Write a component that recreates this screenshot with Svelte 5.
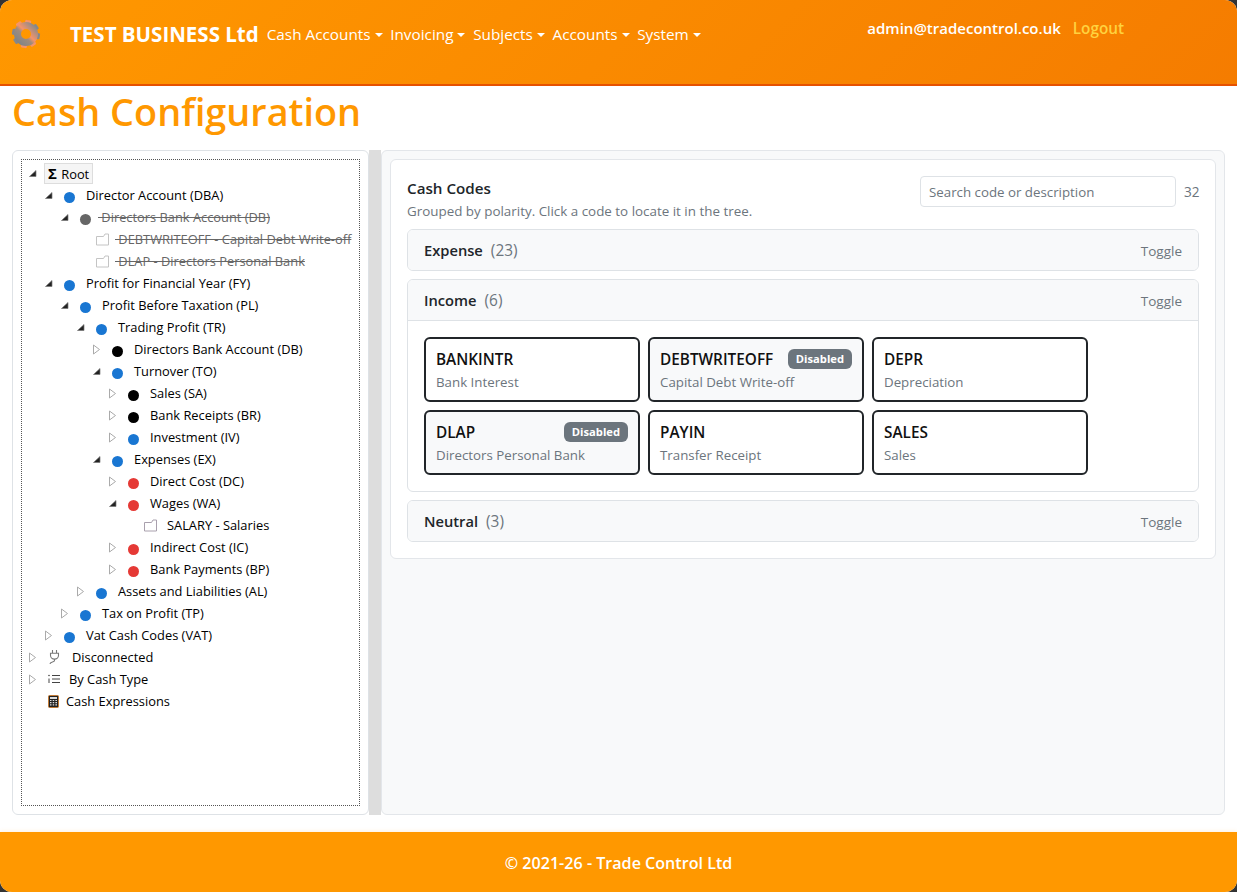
<script>
  const nav = ['Cash Accounts', 'Invoicing', 'Subjects', 'Accounts', 'System'];
  const tree = [
    { d: 1, t: 'open', k: 'dot', c: '#1976d2', label: 'Director Account (DBA)' },
    { d: 2, t: 'open', k: 'dot', c: '#666', label: 'Directors Bank Account (DB)', off: true },
    { d: 3, k: 'file', label: 'DEBTWRITEOFF - Capital Debt Write-off', off: true },
    { d: 3, k: 'file', label: 'DLAP - Directors Personal Bank', off: true },
    { d: 1, t: 'open', k: 'dot', c: '#1976d2', label: 'Profit for Financial Year (FY)' },
    { d: 2, t: 'open', k: 'dot', c: '#1976d2', label: 'Profit Before Taxation (PL)' },
    { d: 3, t: 'open', k: 'dot', c: '#1976d2', label: 'Trading Profit (TR)' },
    { d: 4, t: 'shut', k: 'dot', c: '#000', label: 'Directors Bank Account (DB)' },
    { d: 4, t: 'open', k: 'dot', c: '#1976d2', label: 'Turnover (TO)' },
    { d: 5, t: 'shut', k: 'dot', c: '#000', label: 'Sales (SA)' },
    { d: 5, t: 'shut', k: 'dot', c: '#000', label: 'Bank Receipts (BR)' },
    { d: 5, t: 'shut', k: 'dot', c: '#1976d2', label: 'Investment (IV)' },
    { d: 4, t: 'open', k: 'dot', c: '#1976d2', label: 'Expenses (EX)' },
    { d: 5, t: 'shut', k: 'dot', c: '#e53935', label: 'Direct Cost (DC)' },
    { d: 5, t: 'open', k: 'dot', c: '#e53935', label: 'Wages (WA)' },
    { d: 6, k: 'file', label: 'SALARY - Salaries' },
    { d: 5, t: 'shut', k: 'dot', c: '#e53935', label: 'Indirect Cost (IC)' },
    { d: 5, t: 'shut', k: 'dot', c: '#e53935', label: 'Bank Payments (BP)' },
    { d: 3, t: 'shut', k: 'dot', c: '#1976d2', label: 'Assets and Liabilities (AL)' },
    { d: 2, t: 'shut', k: 'dot', c: '#1976d2', label: 'Tax on Profit (TP)' },
    { d: 1, t: 'shut', k: 'dot', c: '#1976d2', label: 'Vat Cash Codes (VAT)' }
  ];
  const codes = [
    { code: 'BANKINTR', desc: 'Bank Interest' },
    { code: 'DEBTWRITEOFF', desc: 'Capital Debt Write-off', off: true },
    { code: 'DEPR', desc: 'Depreciation' },
    { code: 'DLAP', desc: 'Directors Personal Bank', off: true },
    { code: 'PAYIN', desc: 'Transfer Receipt' },
    { code: 'SALES', desc: 'Sales' }
  ];
  const gearTeeth = [
    { a: 0, c: '#f5946a' }, { a: 45, c: '#85888b' }, { a: 90, c: '#85888b' }, { a: 135, c: '#f5946a' },
    { a: 180, c: '#f5946a' }, { a: 225, c: '#85888b' }, { a: 270, c: '#85888b' }, { a: 315, c: '#f5946a' }
  ];
</script>

{#snippet toggle(kind)}
  <span class="tog">
    {#if kind === 'open'}
      <svg width="9" height="9" viewBox="0 0 9 9"><path d="M8 1.5V7.5H1.5Z" fill="#222" stroke="#777" stroke-width=".7"/></svg>
    {:else if kind === 'shut'}
      <svg width="9" height="11" viewBox="0 0 9 11"><path d="M1.5 1V10L7.5 5.5Z" fill="#fff" stroke="#aaa" stroke-width="1"/></svg>
    {/if}
  </span>
{/snippet}

<div class="page">
  <header class="top">
    <svg class="logo" width="30" height="30" viewBox="0 0 30 30">
      <defs>
        <linearGradient id="lg" x1="0" y1="1" x2="1" y2="0">
          <stop offset="0" stop-color="#7f8487"/>
          <stop offset=".4" stop-color="#a08c7c"/>
          <stop offset=".55" stop-color="#f5946a"/>
          <stop offset="1" stop-color="#8a8a8a"/>
        </linearGradient>
      </defs>
      {#each gearTeeth as g}
        <rect x="12" y="1" width="6" height="6" rx="1.2" fill={g.c} transform="rotate({g.a + 10} 15 15)"/>
      {/each}
      <circle cx="15" cy="15" r="8.5" fill="none" stroke="url(#lg)" stroke-width="7"/>
    </svg>
    <span class="brand">TEST BUSINESS Ltd</span>
    <nav class="menu">
      {#each nav as item}
        <span class="item">{item}<i class="caret"></i></span>
      {/each}
    </nav>
    <div class="user">
      <span class="mail">admin@tradecontrol.co.uk</span>
      <span class="out">Logout</span>
    </div>
  </header>

  <h1>Cash Configuration</h1>

  <main class="split">
    <section class="left">
      <div class="tree">
        <div class="row first">
          {@render toggle('open')}
          <span class="root"><b>Σ</b> Root</span>
        </div>
        {#each tree as n}
          <div class="row" class:off={n.off} style="padding-left:{n.d * 16}px">
            {@render toggle(n.t)}
            {#if n.k === 'dot'}
              <span class="dot" style="background:{n.c}"></span>
            {:else}
              <svg class="file" width="14" height="14" viewBox="0 0 14 14"><path d="M.5 4.5H7.5L9 2H12.5V13H.5Z" fill="#fff" stroke={n.off ? '#c4c4c4' : '#a9a0ad'}/></svg>
            {/if}
            <span class="text">{n.off ? '\u00a0' : ''}{n.label}</span>
          </div>
        {/each}
        <div class="row">
          {@render toggle('shut')}
          <svg class="ico plug" width="12" height="16" viewBox="0 0 12 16" fill="none" stroke="#777" stroke-width="1.1"><path d="M4.5 1V4M8.5 1V4M2.5 4.2H10.5V6.5A4 3.6 0 0 1 2.5 6.5ZM6.5 10V11.5C6.5 13.5 2 12.5 2 15"/></svg>
          <span class="text t-dis">Disconnected</span>
        </div>
        <div class="row">
          {@render toggle('shut')}
          <svg class="ico" width="12" height="12" viewBox="0 0 12 12" fill="none" stroke="#444" stroke-width="1"><path d="M4 2.5H12M4 6H12M4 9.5H12M1 5.5V10"/><circle cx="1" cy="2.5" r=".8" fill="#444" stroke="none"/></svg>
          <span class="text t-type">By Cash Type</span>
        </div>
        <div class="row">
          {@render toggle()}
          <svg class="ico" width="11" height="13" viewBox="0 0 11 13"><rect x=".5" y=".5" width="10" height="12" rx="1" fill="#222" stroke="#c27a35"/><rect x="2" y="2" width="7" height="2" fill="#ddd"/><path d="M2 5.5H3.5M4.7 5.5H6.2M7.4 5.5H9M2 7.7H3.5M4.7 7.7H6.2M7.4 7.7H9M2 9.9H3.5M4.7 9.9H6.2M7.4 9.9H9" stroke="#ddd" stroke-width="1.2"/></svg>
          <span class="text t-exp">Cash Expressions</span>
        </div>
      </div>
    </section>

    <div class="bar"></div>

    <section class="right">
      <div class="card">
        <div class="head">
          <div>
            <div class="title">Cash Codes</div>
            <div class="sub">Grouped by polarity. Click a code to locate it in the tree.</div>
          </div>
          <div class="find">
            <input type="text" placeholder="Search code or description" />
            <span class="count">32</span>
          </div>
        </div>

        <div class="acc">
          <div class="bar-row"><span class="name">Expense</span><span class="num">(23)</span><span class="tg">Toggle</span></div>
        </div>
        <div class="acc">
          <div class="bar-row ruled"><span class="name">Income</span><span class="num">(6)</span><span class="tg">Toggle</span></div>
          <div class="grid">
            {#each codes as c}
              <div class="code" class:dim={c.off}>
                <div class="code-top">
                  <span class="cname">{c.code}</span>
                  {#if c.off}<span class="badge">Disabled</span>{/if}
                </div>
                <div class="desc">{c.desc}</div>
              </div>
            {/each}
          </div>
        </div>
        <div class="acc last">
          <div class="bar-row"><span class="name">Neutral</span><span class="num">(3)</span><span class="tg">Toggle</span></div>
        </div>
      </div>
    </section>
  </main>

  <footer>© 2021-26 - Trade Control Ltd</footer>
</div>

<style>
  :global(body) {
    margin: 0;
    background: #333;
    font-family: "Open Sans", "Noto Sans", sans-serif;
    color: #212529;
  }
  .page {
    height: 892px;
    display: flex;
    flex-direction: column;
    background: #fff;
    border-radius: 12px;
    overflow: hidden;
  }
  .top {
    height: 84px;
    flex: none;
    box-sizing: content-box;
    border-bottom: 2px solid #e65100;
    background: linear-gradient(135deg, #ff9800, #f57c00);
    display: flex;
    align-items: flex-start;
    color: #fff;
    padding-left: 11px;
  }
  .logo { margin-top: 19px; flex: none; }
  .brand {
    margin: 21px 0 0 29px;
    font-size: 20.5px;
    font-weight: 700;
    line-height: 26px;
    white-space: nowrap;
  }
  .menu { display: flex; margin: 21px 0 0 8px; font-size: 15.3px; line-height: 26px; }
  .item { margin-right: 7.7px; white-space: nowrap; }
  .caret {
    display: inline-block;
    margin-left: 4px;
    vertical-align: 3px;
    border-top: 4.5px solid #fff;
    border-left: 4.5px solid transparent;
    border-right: 4.5px solid transparent;
  }
  .user { margin: 15px 113px 0 auto; display: flex; gap: 12px; font-size: 15px; line-height: 26px; white-space: nowrap; }
  .mail { font-weight: 600; }
  .out { color: #ffd23f; font-weight: 600; font-size: 15.3px; }

  h1 {
    margin: 0;
    padding: 0 12px;
    height: 64px;
    flex: none;
    font-size: 37.8px;
    line-height: 51px;
    font-weight: 600;
    color: #ff9800;
  }

  .split { flex: 1; display: flex; min-height: 0; margin: 0 12px 17px; }
  .left {
    width: 357px;
    flex: none;
    box-sizing: border-box;
    border: 1px solid #dee2e6;
    border-radius: 6px;
    padding: 8px;
    background: #fff;
  }
  .tree {
    height: 100%;
    box-sizing: border-box;
    border: 1px dotted #555;
    padding-top: 2px;
    overflow: hidden;
    font-size: 12.85px;
    color: #000;
  }
  .row { display: flex; align-items: center; height: 22px; white-space: nowrap; }
  .tog { width: 16px; margin-left: 2px; display: flex; justify-content: center; flex: none; }
  .root {
    margin-left: 4px;
    padding: 0 3px;
    width: 49px;
    height: 21px;
    line-height: 19px;
    box-sizing: border-box;
    border: 1px solid #ddd;
    background: #f5f5f5;
  }
  .root b { font-size: 15px; margin-right: 1px; }
  .dot { width: 11px; height: 11px; border-radius: 50%; margin: 4px 0 0 8px; flex: none; }
  .text { margin-left: 11px; }
  .file { margin-left: 8px; flex: none; }
  .file + .text { margin-left: 9px; }
  .off .text { color: #666; text-decoration: line-through; }
  .off .file + .text { margin-left: 5px; }
  .off .dot + .text { margin-left: 7px; }
  .ico { margin-left: 8px; flex: none; }
  .t-dis { margin-left: 12px; }
  .t-type { margin-left: 9px; }
  .t-exp { margin-left: 7px; }

  .bar { width: 12px; flex: none; background: #dddddd; }

  .right {
    flex: 1;
    min-width: 0;
    box-sizing: border-box;
    border: 1px solid #e3e6ea;
    border-radius: 6px;
    background: #f8f9fa;
    padding: 8px 8px 0 8px;
  }
  .card {
    background: #fff;
    border: 1px solid #e3e6ea;
    border-radius: 6px;
    padding: 16px;
  }
  .head { display: flex; justify-content: space-between; align-items: flex-start; height: 53px; }
  .title { font-size: 15.2px; font-weight: 600; line-height: 24px; }
  .sub { font-size: 13.4px; color: #6c757d; line-height: 20px; margin-top: 1px; }
  .find { display: flex; align-items: center; gap: 8px; }
  input {
    width: 256px;
    height: 31px;
    box-sizing: border-box;
    border: 1px solid #dee2e6;
    border-radius: 4px;
    padding: 1px 8px 0;
    font: 13.3px "Open Sans", sans-serif;
    background: #fff;
  }
  input::placeholder { color: #6c757d; opacity: 1; }
  .count { font-size: 13.6px; color: #6c757d; width: 15px; }

  .acc {
    border: 1px solid #dee2e6;
    border-radius: 6px;
    margin-bottom: 8px;
    overflow: hidden;
  }
  .acc.last { margin-bottom: 0; }
  .bar-row {
    height: 40px;
    background: #f8f9fa;
    display: flex;
    align-items: center;
    padding: 0 16px;
  }
  .ruled { height: 40px; border-bottom: 1px solid #dee2e6; }
  .name { font-size: 14.7px; font-weight: 600; }
  .num { font-size: 15.4px; color: #6c757d; margin-left: 8px; }
  .tg { margin-left: auto; font-size: 13.5px; color: #6c757d; padding-top: 1px; }

  .grid {
    display: grid;
    grid-template-columns: repeat(3, 216px);
    gap: 8px;
    padding: 16px;
  }
  .code {
    height: 65px;
    box-sizing: border-box;
    border: 2px solid #212529;
    border-radius: 6px;
    padding: 10px 10px 0;
    background: #fff;
  }
  .code.dim { background: #f8f9fa; }
  .code-top { display: flex; justify-content: space-between; align-items: center; height: 20px; }
  .cname { font-size: 15.35px; font-weight: 600; color: #111; }
  .badge {
    height: 20px;
    line-height: 20px;
    padding: 0 8px;
    border-radius: 6px;
    background: #6c757d;
    color: #fff;
    font-size: 11.2px;
    font-weight: 700;
  }
  .desc { font-size: 13.3px; color: #6c757d; line-height: 18px; margin-top: 4px; }

  footer {
    height: 60px;
    flex: none;
    box-sizing: border-box;
    padding-top: 2px;
    background: #ff9800;
    box-shadow: 0 -1px 4px rgba(255, 152, 0, .12);
    color: #fff;
    font-size: 16.1px;
    font-weight: 600;
    display: flex;
    align-items: center;
    justify-content: center;
  }
</style>
